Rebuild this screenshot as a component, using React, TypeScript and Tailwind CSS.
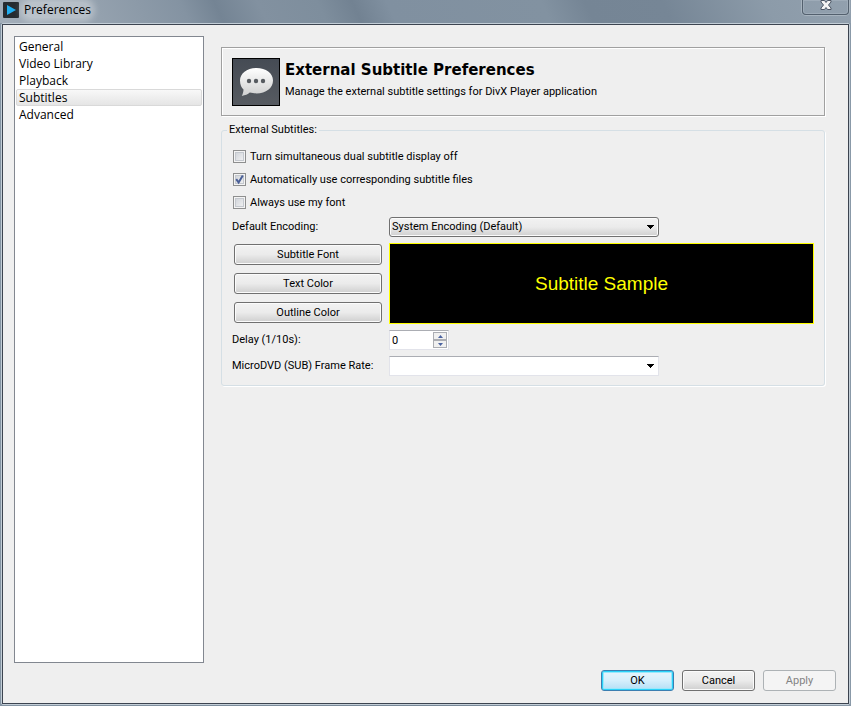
import { useState } from 'react'
import type { ReactNode } from 'react'

const sections = ['General', 'Video Library', 'Playback', 'Subtitles', 'Advanced']

const buttonLook =
  'rounded-[3px] border border-[#707070] bg-linear-to-b from-[#f2f2f2] from-0% via-[#ebebeb] via-50% to-[#cfcfcf] to-100% text-center text-black shadow-[inset_0_0_0_1px_#fbfbfb]'

function Arrow() {
  return (
    <svg
      className="pointer-events-none absolute top-2 right-1"
      width="9"
      height="5"
      viewBox="0 0 9 5"
      shapeRendering="crispEdges"
    >
      <path d="M1 0h7v1h-1v1h-1v1h-1v1h-1v-1h-1v-1h-1v-1h-1z" />
    </svg>
  )
}

function CheckRow({
  label,
  checked,
  onChange,
}: {
  label: string
  checked: boolean
  onChange: (value: boolean) => void
}) {
  return (
    <label className="flex h-[23px] items-center gap-1">
      <span className="relative flex size-[13px]">
        <input
          type="checkbox"
          checked={checked}
          onChange={(e) => onChange(e.target.checked)}
          className="size-[13px] appearance-none border border-[#8e8f8f] bg-linear-to-br from-[#cbcfd5] to-[#f6f6f6] shadow-[inset_0_0_0_1px_#f4f4f4,inset_0_0_0_2px_#c4c8ce]"
        />
        {checked && (
          <svg
            className="pointer-events-none absolute inset-0"
            width="13"
            height="13"
            viewBox="0 0 13 13"
            fill="none"
            stroke="#4a5f97"
            strokeWidth="2"
          >
            <path d="M3.200 6.200l2.400 3.200L9.800 2.500" />
          </svg>
        )}
      </span>
      {label}
    </label>
  )
}

function PushButton({ children }: { children: ReactNode }) {
  return (
    <button type="button" className={`h-[21px] w-[148px] ${buttonLook}`}>
      {children}
    </button>
  )
}

export default function App() {
  const [section, setSection] = useState('Subtitles')
  const [dualOff, setDualOff] = useState(false)
  const [autoFiles, setAutoFiles] = useState(true)
  const [ownFont, setOwnFont] = useState(false)

  return (
    <div className="flex min-h-screen flex-col bg-linear-to-r from-[#8494a3] via-[#768797] via-50% to-[#8a99a8] font-['Roboto',sans-serif] text-[11px] leading-[14px] text-black">
      <header className="flex h-[23px] items-start justify-between bg-[linear-gradient(65deg,#a3aeb9_0%,#94a1ae_12%,#8493a2_22%,#748494_26%,#8291a0_31%,#7e8e9d_38%,#728292_42%,#8090a0_46%,#8292a1_64%,#758595_69%,#768696_78%,#8c9ba9_90%,#92a0ae_100%)] pr-0.5 pl-[3px]">
        <div className="flex h-5 items-center gap-[5px]">
          <svg width="16" height="16" viewBox="0 0 16 16">
            <rect width="16" height="16" rx="1" fill="#262b30" />
            <path d="M4 3l9 5-9 5z" fill="#20aef0" />
          </svg>
          <h1 className="rounded-full bg-white/30 font-['Open_Sans',sans-serif] text-[12px] leading-4 shadow-[0_0_6px_4px_rgba(255,255,255,0.3)]">
            Preferences
          </h1>
        </div>
        <button
          type="button"
          aria-label="Close"
          className="flex h-[15px] w-[47px] items-start justify-center rounded-b-[4px] border border-t-0 border-[#53606e] shadow-[inset_0_0_0_1px_#9eabb8,0_0_0_1px_#a8b4bf]"
        >
          <svg width="12" height="11" viewBox="0 0 12 11">
            <path
              d="M1 0.500H4.500L6 2.500 7.500 0.500H11V2L8.500 5 11 8V9.500H7.500L6 7.500 4.500 9.500H1V8L3.500 5 1 2z"
              fill="#f3f3f3"
              stroke="#4d5664"
            />
          </svg>
        </button>
      </header>

      <div className="mr-px mb-px ml-px flex grow flex-col rounded-[2px] border border-[#c3ced7]">
        <div className="flex grow flex-col border border-[#3c4450] bg-[#efefef]">
          <div className="flex grow gap-[17px] pt-[11px] pr-[23px] pl-[11px]">
            <nav className="mb-[7px] w-[190px] shrink-0 border border-[#828790] bg-white p-px font-['Open_Sans',sans-serif] text-[12px]">
              <ul>
                {sections.map((name) => (
                  <li key={name}>
                    <button
                      type="button"
                      onClick={() => setSection(name)}
                      className={`block h-[17px] w-full rounded-[2px] border px-[2px] text-left leading-[15px] ${
                        name === section
                          ? 'border-[#d9d9d9] bg-linear-to-b from-[#f8f8f8] to-[#e5e5e5]'
                          : 'border-transparent'
                      }`}
                    >
                      {name}
                    </button>
                  </li>
                ))}
              </ul>
            </nav>

            <main className="min-w-0 grow pt-[11px]">
              <div className="flex h-[69px] items-center gap-[5px] border border-[#a0a0a0] pl-[10px] shadow-[1px_1px_0_#fff,inset_1px_1px_0_#fff]">
                <svg width="48" height="48" viewBox="0 0 48 48">
                  <defs>
                    <linearGradient id="tile" x1="0" y1="0" x2="0" y2="1">
                      <stop offset="0" stopColor="#454b54" />
                      <stop offset="1" stopColor="#575b61" />
                    </linearGradient>
                    <linearGradient id="bubble" x1="0" y1="0" x2="0" y2="1">
                      <stop offset="0" stopColor="#fff" />
                      <stop offset="1" stopColor="#cfcfcf" />
                    </linearGradient>
                  </defs>
                  <rect x=".5" y=".5" width="47" height="47" fill="url(#tile)" stroke="#000" />
                  <path
                    d="M24.500 10C15 10 8 15.500 8 22.500c0 4.500 1.500 7 3.500 9 0 2-.5 4-1.700 6.500 3.500-.6 6-1.600 8-3.400 2 .5 4.500.8 6.700.8C34 35.400 41 30 41 22.500S34 10 24.500 10z"
                    fill="url(#bubble)"
                  />
                  <circle cx="17" cy="23" r="2.200" fill="#575b60" />
                  <circle cx="24" cy="23" r="2.200" fill="#575b60" />
                  <circle cx="31" cy="23" r="2.200" fill="#575b60" />
                </svg>
                <div className="pb-[6px]">
                  <h2 className="font-['DejaVu_Sans',sans-serif] text-[15px] leading-6 font-bold">
                    External Subtitle Preferences
                  </h2>
                  <p className="mt-[3px]">
                    Manage the external subtitle settings for DivX Player application
                  </p>
                </div>
              </div>

              <fieldset className="mt-[7px] rounded-[3px] border border-[#d5dfe5] pr-[10px] pb-[9px] pl-[10px] shadow-[1px_1px_0_#fff]">
                <legend className="-ml-[5px] px-[2px]">External Subtitles:</legend>
                <div className="flex flex-col pt-[8px] pl-px">
                  <CheckRow
                    label="Turn simultaneous dual subtitle display off"
                    checked={dualOff}
                    onChange={setDualOff}
                  />
                  <CheckRow
                    label="Automatically use corresponding subtitle files"
                    checked={autoFiles}
                    onChange={setAutoFiles}
                  />
                  <CheckRow
                    label="Always use my font"
                    checked={ownFont}
                    onChange={setOwnFont}
                  />
                </div>

                <div className="mt-[3px] grid grid-cols-[157px_1fr] items-center gap-y-[6px]">
                  <label htmlFor="encoding">Default Encoding:</label>
                  <div className="relative h-5 max-w-[270px]">
                    <select
                      id="encoding"
                      className="h-5 w-full appearance-none rounded-[3px] border border-[#707070] bg-linear-to-b from-[#f2f2f2] via-[#ebebeb] via-50% to-[#cfcfcf] pl-[2px] shadow-[inset_0_0_0_1px_#fbfbfb]"
                    >
                      <option>System Encoding (Default)</option>
                    </select>
                    <Arrow />
                  </div>

                  <div className="flex flex-col gap-2 pl-[2px]">
                    <PushButton>Subtitle Font</PushButton>
                    <PushButton>Text Color</PushButton>
                    <PushButton>Outline Color</PushButton>
                  </div>
                  <div className="flex h-[81px] items-center justify-center border border-[#ffff00] bg-black font-['Liberation_Sans',Arial,sans-serif] text-[19px] leading-6 text-[#ffff00]">
                    Subtitle Sample
                  </div>

                  <label htmlFor="delay">Delay (1/10s):</label>
                  <div className="flex h-5 w-[60px] items-center border border-[#e2e3ea] border-t-[#abadb3] bg-white pr-px">
                    <input
                      id="delay"
                      type="text"
                      defaultValue="0"
                      className="h-4 w-0 grow pl-[2px] outline-none"
                    />
                    <div className="flex flex-col">
                      <button
                        type="button"
                        aria-label="Increase"
                        className="flex h-2 w-[14px] items-center justify-center border border-[#abadb3] bg-[#f0f0f0]"
                      >
                        <svg width="5" height="3" viewBox="0 0 5 3">
                          <path d="M0 3L2.500 0 5 3z" fill="#4a62a0" />
                        </svg>
                      </button>
                      <button
                        type="button"
                        aria-label="Decrease"
                        className="flex h-2 w-[14px] items-center justify-center border border-[#abadb3] bg-[#f0f0f0]"
                      >
                        <svg width="5" height="3" viewBox="0 0 5 3">
                          <path d="M0 0L2.500 3 5 0z" fill="#4a62a0" />
                        </svg>
                      </button>
                    </div>
                  </div>

                  <label htmlFor="rate">MicroDVD (SUB) Frame Rate:</label>
                  <div className="relative h-5 max-w-[270px]">
                    <select
                      id="rate"
                      className="h-5 w-full appearance-none border border-[#e2e3ea] border-t-[#abadb3] bg-white pl-[2px]"
                    >
                      <option></option>
                    </select>
                    <Arrow />
                  </div>
                </div>
              </fieldset>
            </main>
          </div>

          <footer className="flex justify-end gap-2 pr-3 pb-3">
            <button
              type="button"
              className="h-[21px] w-[73px] rounded-[3px] border border-[#3c7fb1] bg-linear-to-b from-[#e8f5fc] via-[#d5effc] via-50% to-[#b3def5] shadow-[inset_0_0_0_1px_#2ad2f8,inset_0_0_0_2px_#9be8fc]"
            >
              OK
            </button>
            <button type="button" className={`h-[21px] w-[73px] ${buttonLook}`}>
              Cancel
            </button>
            <button
              type="button"
              disabled
              className="h-[21px] w-[73px] rounded-[3px] border border-[#adb2b5] bg-[#f4f4f4] text-[#838383]"
            >
              Apply
            </button>
          </footer>
        </div>
      </div>
    </div>
  )
}
